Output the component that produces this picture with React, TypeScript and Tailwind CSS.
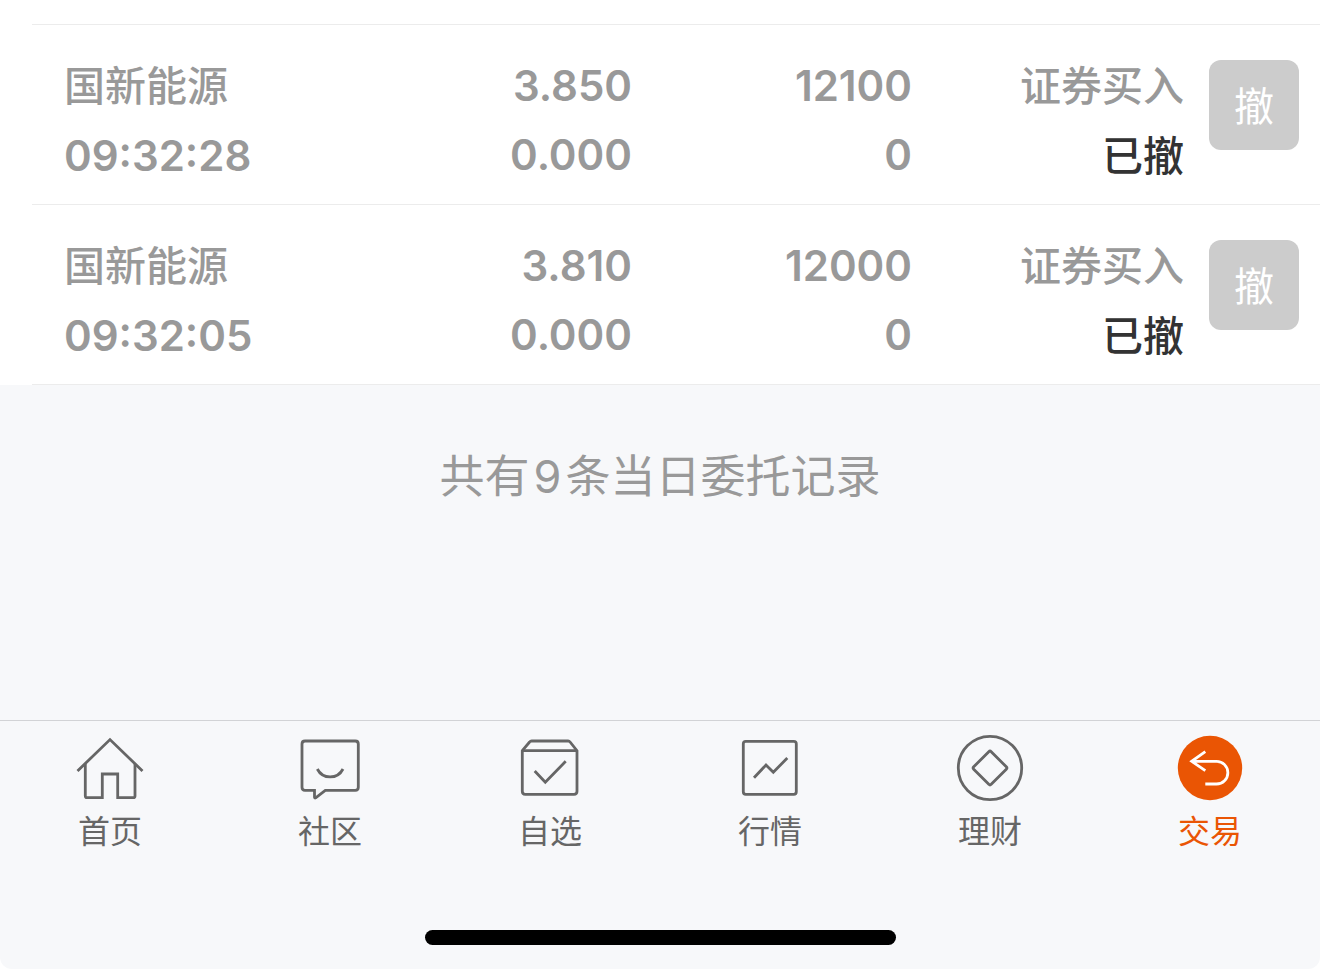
import type { ReactNode } from "react";

const ORDERS = [
  {
    name: "国新能源",
    time: "09:32:28",
    price: "3.850",
    dealPrice: "0.000",
    amount: "12100",
    dealAmount: "0",
    type: "证券买入",
    status: "已撤",
  },
  {
    name: "国新能源",
    time: "09:32:05",
    price: "3.810",
    dealPrice: "0.000",
    amount: "12000",
    dealAmount: "0",
    type: "证券买入",
    status: "已撤",
  },
];

const TABS = [
  {
    label: "首页",
    icon: (
      <>
        <path d="M3.5 39 36 7.6l32.5 31.4" />
        <path d="M11.3 32v32q0 1.7 1.7 1.7h15.3V42h15.4v23.7h15.6q1.7 0 1.7-1.7V32" />
      </>
    ),
  },
  {
    label: "社区",
    icon: (
      <>
        <path d="M11 9h50.3q3 0 3 3v43.3q0 3-3 3h-30l-9.6 7.5q-1.2.6-1.2-.8v-6.7H11q-3 0-3-3V12q0-3 3-3z" />
        <path d="M23.3 37c5.5 10.6 20.2 10.6 25.7 0" />
      </>
    ),
  },
  {
    label: "自选",
    icon: (
      <>
        <path d="M8.3 18.7 15.6 10q.8-1 2-1h36.5q1.2 0 2 1l6.9 8.7v40.6q0 3-3 3H11.3q-3 0-3-3z" />
        <path d="M8.3 18.7H63" />
        <path d="m20.7 39 10.6 11.3 20.4-21" />
      </>
    ),
  },
  {
    label: "行情",
    icon: (
      <>
        <rect x="9.3" y="9.3" width="53" height="53" rx="2.5" />
        <path d="M20 45.7 32 33l7.3 7.3L53.3 26" />
      </>
    ),
  },
  {
    label: "理财",
    icon: (
      <>
        <circle cx="36" cy="36" r="31.7" />
        <path d="M34.8 19.7q1.2-1.2 2.4 0l15.1 15.1q1.2 1.2 0 2.4L37.2 52.3q-1.2 1.2-2.4 0L19.7 37.2q-1.2-1.2 0-2.4z" />
      </>
    ),
  },
  {
    label: "交易",
    active: true,
    icon: (
      <>
        <circle cx="36" cy="36" r="32.2" fill="currentColor" stroke="none" />
        <path
          d="M31.3 19.7 17.7 29.3l13.6 9.4M18.5 29.3h24a11.35 11.35 0 0 1 0 22.7H31.3"
          stroke="#fff"
        />
      </>
    ),
  },
];

function Cell({ top, bottom, align = "text-right" }: { top: ReactNode; bottom: ReactNode; align?: string }) {
  return (
    <td className={`p-0 pt-[26px] align-top ${align}`}>
      <div>{top}</div>
      <div>{bottom}</div>
    </td>
  );
}

function OrderTable() {
  return (
    <div className="bg-white pt-6 pl-8">
      <table className="w-full table-fixed border-separate border-spacing-0 border-b border-[#ececec] text-[42px] leading-[69px] font-semibold text-[#999999]">
        <colgroup>
          <col />
          <col className="w-70" />
          <col className="w-70" />
          <col className="w-68" />
          <col className="w-34" />
        </colgroup>
        <tbody>
          {ORDERS.map((o) => (
            <tr key={o.time} className="h-45 *:border-t *:border-[#ececec]">
              <Cell
                top={<span className="text-[41px] font-medium">{o.name}</span>}
                bottom={o.time}
                align="pl-8 text-left"
              />
              <Cell top={o.price} bottom={o.dealPrice} />
              <Cell top={o.amount} bottom={o.dealAmount} />
              <Cell
                top={<span className="text-[41px] font-medium">{o.type}</span>}
                bottom={<span className="text-[41px] font-medium text-[#333333]">{o.status}</span>}
              />
              <td className="p-0 pt-[35px] pl-[25px] align-top">
                <button
                  type="button"
                  className="flex size-[90px] items-center justify-center rounded-xl bg-[#cccccc] pt-1 text-[40px] leading-[60px] font-normal text-white"
                >
                  撤
                </button>
              </td>
            </tr>
          ))}
        </tbody>
      </table>
    </div>
  );
}

function TabBar() {
  return (
    <nav className="border-t border-[#d2d3d6] pt-[11px]">
      <div className="grid grid-cols-6">
        {TABS.map((tab) => (
          <a
            key={tab.label}
            href="#"
            className={`flex flex-col items-center gap-2 text-[32px] leading-10 ${
              tab.active ? "text-[#ea5504]" : "text-[#666666]"
            }`}
          >
            <svg
              viewBox="0 0 72 72"
              className="size-18"
              fill="none"
              stroke="currentColor"
              strokeWidth="2.8"
              aria-hidden="true"
            >
              {tab.icon}
            </svg>
            {tab.label}
          </a>
        ))}
      </div>
      <div className="mx-auto mt-[78px] mb-6 h-[15px] w-[471px] rounded-full bg-black" />
    </nav>
  );
}

export default function App() {
  return (
    <div className="min-h-screen bg-white">
      <div className="flex min-h-screen flex-col rounded-b-xl bg-[#f7f8fa] font-['Inter','Noto_Sans_CJK_SC',sans-serif] antialiased">
        <main className="flex-1">
          <OrderTable />
          <p className="pt-[62px] text-center text-[45px] leading-[60px] text-[#999999]">
            共有<span className="mx-1">9</span>条当日委托记录
          </p>
        </main>
        <TabBar />
      </div>
    </div>
  );
}
